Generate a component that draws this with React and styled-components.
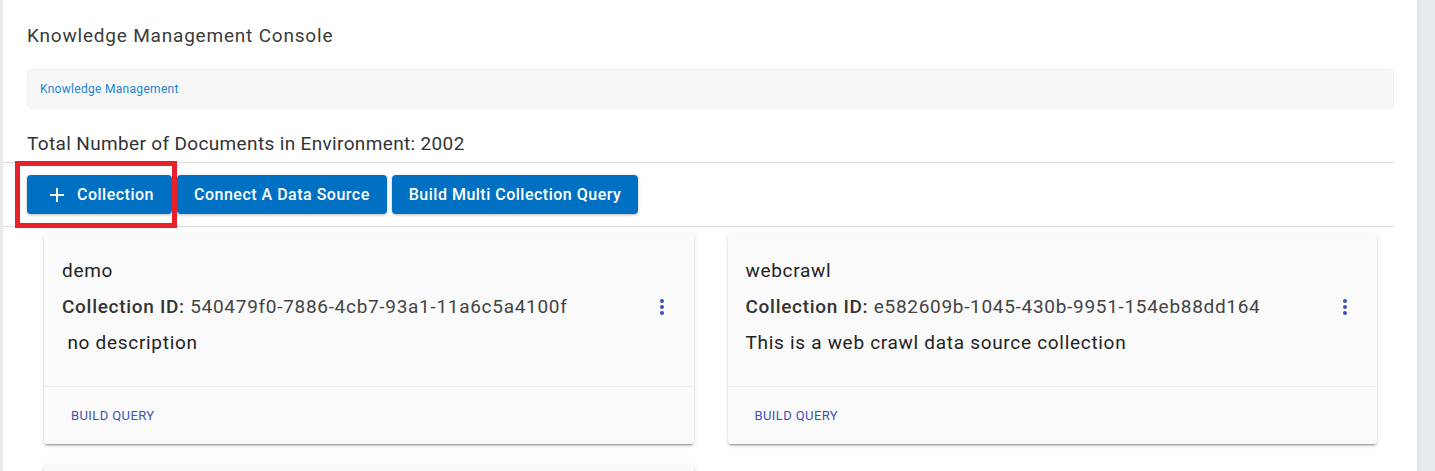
import React from 'react';
import styled, {createGlobalStyle} from 'styled-components';

const GlobalStyle = createGlobalStyle`
    html,
    body {
        margin: 0;
        padding: 0;
        background: #eef1f4;
        font-family: Roboto, 'Liberation Sans', sans-serif;
        overflow: hidden;
    }
    * {
        box-sizing: border-box;
    }
`;

const Page = styled.div`
    display: flex;
    height: 471px;
    padding-left: 3px;
    background: #e8ebee;
`;

const Panel = styled.main`
    width: 1417px;
    flex-shrink: 0;
    background: #fff;
    padding: 24px 23px 0 24px;
    border-right: 3px solid #e0e3e7;
    overflow: hidden;
`;

const Title = styled.h1`
    margin: 0;
    font-size: 19px;
    letter-spacing: 0.8px;
    line-height: 24px;
    font-weight: 400;
    color: #3b3b3b;
`;

const Breadcrumb = styled.nav`
    margin-top: 21px;
    height: 40px;
    display: flex;
    align-items: center;
    padding: 0 12px;
    background: #f7f7f7;
    border: 1px solid #efefef;
    border-radius: 4px;
`;

const Crumb = styled.a`
    font-size: 12px;
    letter-spacing: 0.3px;
    color: #2183d4;
    text-decoration: none;
`;

const Total = styled.h2`
    margin: 23px 0 0;
    font-size: 19px;
    letter-spacing: 0.35px;
    line-height: 24px;
    font-weight: 400;
    color: #333;
`;

const Rule = styled.hr`
    margin: ${({$top}) => $top || 0}px 0 0 -24px;
    border: 0;
    border-top: 1px solid #dcdcdc;
`;

const Toolbar = styled.div`
    position: relative;
    display: flex;
    gap: 5px;
    padding: 12px 0 12px;
`;

const Button = styled.button`
    height: 39px;
    display: flex;
    align-items: center;
    gap: 12px;
    padding: 0 ${({$right}) => $right || 17}px 0 ${({$left}) => $left || 17}px;
    background: #0071c2;
    color: #fff;
    border: 0;
    border-radius: 4px;
    font-family: Roboto, 'Liberation Sans', sans-serif;
    font-size: 16px;
    letter-spacing: 0.5px;
    font-weight: 500;
    box-shadow: 0 1px 3px rgba(0, 0, 0, 0.3);
    cursor: pointer;
`;

const Highlight = styled.span`
    position: absolute;
    left: -12px;
    top: -2px;
    width: 162px;
    height: 67px;
    border: 5px solid #e8202a;
    pointer-events: none;
`;

const Grid = styled.div`
    display: grid;
    grid-template-columns: 1fr 1fr;
    column-gap: 34px;
    row-gap: 21px;
    margin-top: 7px;
    padding: 0 17px;
`;

const Card = styled.article`
    background: #fafafa;
    border-radius: 3px;
    box-shadow: 0 3px 1px -2px rgba(0, 0, 0, 0.2), 0 2px 2px 0 rgba(0, 0, 0, 0.14),
        0 1px 5px 0 rgba(0, 0, 0, 0.12);
`;

const CardBody = styled.div`
    height: 152px;
    padding: 25px 20px 0 18px;
    display: flex;
    flex-direction: column;
    gap: 12px;
    font-size: 19px;
    letter-spacing: 0.7px;
    line-height: 24px;
    color: #222;
`;

const IdRow = styled.div`
    display: flex;
    align-items: center;
    justify-content: space-between;
    color: #444;
`;

const Label = styled.span`
    font-weight: 500;
    color: #333;
`;

const Description = styled.div`
    white-space: pre;
`;

const CardFooter = styled.div`
    height: 58px;
    display: flex;
    align-items: center;
    padding: 0 27px;
    border-top: 1px solid #ececec;
`;

const TextButton = styled.button`
    padding: 0;
    background: none;
    border: 0;
    font-family: Roboto, 'Liberation Sans', sans-serif;
    font-size: 13px;
    letter-spacing: 0.4px;
    color: #3f51b5;
    cursor: pointer;
`;

const Plus = () => (
    <svg width="16" height="16" viewBox="0 0 16 16" fill="none" stroke="#fff" strokeWidth="2">
        <path d="M8 1v14M1 8h14" />
    </svg>
);

const MoreVert = () => (
    <svg width="24" height="24" viewBox="0 0 24 24" fill="#3f51b5">
        <circle cx="12" cy="6" r="2" />
        <circle cx="12" cy="12" r="2" />
        <circle cx="12" cy="18" r="2" />
    </svg>
);

const collections = [
    {name: 'demo', id: '540479f0-7886-4cb7-93a1-11a6c5a4100f', description: ' no description'},
    {
        name: 'webcrawl',
        id: 'e582609b-1045-430b-9951-154eb88dd164',
        description: 'This is a web crawl data source collection',
    },
    {name: 'support', id: '8d1c3f52-20aa-4f6e-b3c9-7e41d0a2c915', description: ' no description'},
];

function CollectionCard({name, id, description}) {
    return (
        <Card>
            <CardBody>
                <div>{name}</div>
                <IdRow>
                    <span>
                        <Label>Collection ID:</Label> {id}
                    </span>
                    <MoreVert />
                </IdRow>
                <Description>{description}</Description>
            </CardBody>
            <CardFooter>
                <TextButton>BUILD QUERY</TextButton>
            </CardFooter>
        </Card>
    );
}

export default function App() {
    return (
        <Page>
            <GlobalStyle />
            <Panel>
                <Title>Knowledge Management Console</Title>
                <Breadcrumb>
                    <Crumb href="#">Knowledge Management</Crumb>
                </Breadcrumb>
                <Total>Total Number of Documents in Environment: 2002</Total>
                <Rule $top={6} />
                <Toolbar>
                    <Button $left={22} $right={18}>
                        <Plus />
                        Collection
                    </Button>
                    <Button>Connect A Data Source</Button>
                    <Button>Build Multi Collection Query</Button>
                    <Highlight />
                </Toolbar>
                <Rule />
                <Grid>
                    {collections.map((c) => (
                        <CollectionCard key={c.id} {...c} />
                    ))}
                </Grid>
            </Panel>
        </Page>
    );
}
